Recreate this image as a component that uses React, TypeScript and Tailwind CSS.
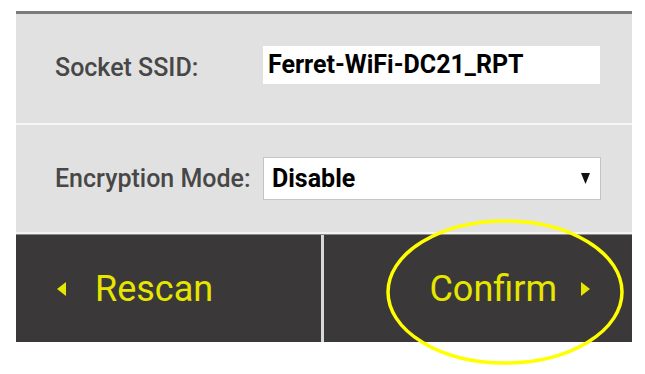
export default function App() {
  return (
    <div
      className="relative w-[645px] h-[374px] bg-white pt-[11px] px-[16px]"
      style={{ fontFamily: "Roboto, 'Liberation Sans', sans-serif" }}
    >
      <div className="w-[616px]">
        <div className="border-t-[3px] border-[#7b7b7b] bg-[#e1e1e1]">
          <div className="h-[109px] flex items-center pl-[39px] pb-[8px]">
            <div className="w-[208px] pt-[6px] text-[25px] font-medium text-[#474747]">Socket SSID:</div>
            <div className="w-[337px] h-[38px] bg-white flex items-center pl-[5px] text-[25px] font-bold text-black">
              Ferret-WiFi-DC21_RPT
            </div>
          </div>
          <div className="h-[2px] bg-[#f6f6f6]" />
          <div className="h-[107px] flex items-center pl-[39px]">
            <div className="w-[208px] text-[25px] font-medium text-[#474747] whitespace-nowrap">Encryption Mode:</div>
            <div className="w-[338px] h-[43px] bg-white border border-[#c4c4c4] flex items-center justify-between pl-[8px] pr-[10px]">
              <span className="text-[25px] font-bold text-black">Disable</span>
              <svg width="9" height="11" viewBox="0 0 9 11">
                <path d="M0 0 H9 L4.5 11 Z" fill="#111" />
              </svg>
            </div>
          </div>
        </div>
        <div className="h-[2px] bg-[#f2f2f2]" />
        <div className="flex border-t border-[#8a8a8a] bg-[#3a3838]">
          <div className="w-[305px] h-[107px] flex items-center pl-[41px] gap-[29px] text-[#e6e600]">
            <svg width="9" height="14" viewBox="0 0 9 14">
              <path d="M9 0 V14 L0 7 Z" fill="#e6e600" />
            </svg>
            <span className="text-[36px] leading-none">Rescan</span>
          </div>
          <div className="w-[3px] bg-[#d8d8d8]" />
          <div className="w-[308px] h-[107px] flex items-center justify-end pr-[42px] gap-[24px] text-[#e6e600]">
            <span className="text-[36px] leading-none">Confirm</span>
            <svg width="9" height="14" viewBox="0 0 9 14">
              <path d="M0 0 V14 L9 7 Z" fill="#e6e600" />
            </svg>
          </div>
        </div>
      </div>
      <svg className="absolute left-[385px] top-[218px]" width="240" height="150" viewBox="0 0 240 150">
        <ellipse cx="120" cy="74" rx="117" ry="71" fill="none" stroke="#ffff00" strokeWidth="3.5" />
      </svg>
    </div>
  );
}
